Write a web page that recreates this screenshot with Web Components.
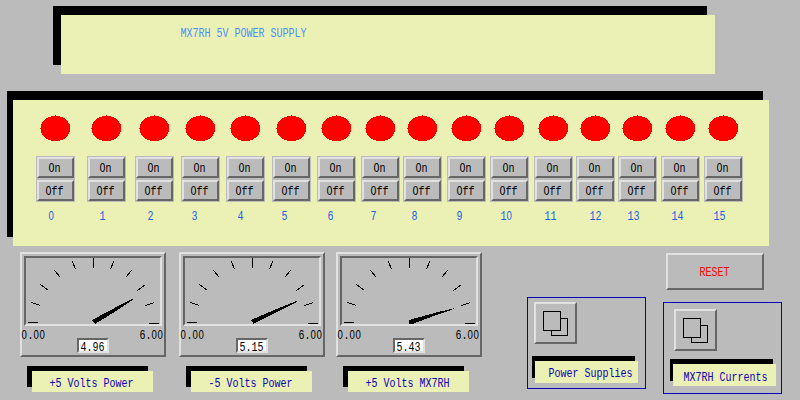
<!DOCTYPE html>
<html lang="en">
<head>
<meta charset="utf-8">
<title>MX7RH 5V Power Supply</title>
<style>
  html, body { margin: 0; width: 800px; height: 400px; overflow: hidden; background: #bbb; }
</style>
</head>
<body>
<supply-console></supply-console>
<script>
const define = (name, css, html) => {
  const tpl = document.createElement('template');
  customElements.define(name, class extends HTMLElement {
    connectedCallback() {
      if (this.shadowRoot) return;
      tpl.innerHTML = `<style>:host{display:block;box-sizing:border-box}*{box-sizing:border-box}${css}</style>` +
        (typeof html === 'function' ? html(this) : html);
      const content = tpl.content.cloneNode(true);
      this.attachShadow({ mode: 'open' }).append(content);
    }
  });
};

/* Tall, narrow terminal lettering: 6px cells, baseline 10px below the top. Zeros are drawn plain. */
define('term-text', `
  :host { height: 13px; width: max-content; white-space: pre; }
  div { font: 10px/13px "Liberation Mono", monospace; transform-origin: 0 9px; transform: translate(.4px, 1px) scaleY(1.37); }
  i { font: 9.6px/1 "Liberation Sans", sans-serif; line-height: 0; letter-spacing: .66px; }
`, el => `<div>${el.getAttribute('value').replace(/0/g, '<i>0</i>')}</div>`);

/* Cream plate with a hard black shadow up and to the left. */
define('shadow-plate', `
  :host { background: #ebf0b5; box-shadow: calc(-1 * var(--dx)) calc(-1 * var(--dy)) 0 #000; }
`, '<slot></slot>');

define('bevel-box', `
  :host { border: 2px solid; border-color: #e1e1e1 #666 #666 #e1e1e1; background: #bbb; }
  :host([sunken]) { border-color: #666 #e1e1e1 #e1e1e1 #666; }
`, '<slot></slot>');

define('status-lamp', `
  :host { width: 30px; height: 26px; }
  svg { display: block; }
`, `<svg width="30" height="26" shape-rendering="crispEdges" fill="red">
  <ellipse cx="15.5" cy="13.5" rx="14.8" ry="12.7"/><path d="M15 0h1v2h-1zM0 13h2v1H0z"/></svg>`);

define('power-channel', `
  :host { width: 39px; padding-top: 15px; flex: none; }
  status-lamp { margin-left: 4px; }
  .pair { margin-top: 15px; height: 46px; padding: 1px; background: #bbb; display: flex; flex-direction: column; gap: 2px; }
  bevel-box { width: 37px; height: 21px; }
  .on { padding: 3px 0 0 9px; }
  .off { padding: 3px 0 0 6px; }
  .num { margin-top: 8px; color: #2160e6; }
`, el => `<status-lamp></status-lamp>
  <div class="pair">
    <bevel-box class="on"><term-text value="On"></term-text></bevel-box>
    <bevel-box class="off"><term-text value="Off"></term-text></bevel-box>
  </div>
  <term-text class="num" style="margin-left:${el.getAttribute('inset')}px" value="${el.getAttribute('number')}"></term-text>`);

define('volt-meter', `
  :host { width: 146px; flex: none; }
  .case { height: 105px; padding: 2px; }
  .dial { width: 138px; height: 70px; }
  svg { display: block; }
  .foot { display: grid; grid-template-columns: 56px 32px 1fr; height: 28px; margin-left: -3px; }
  .low { margin-top: 3px; }
  .value { width: 32px; height: 15px; margin-top: 12px; background: #fff; padding: 1px 0 0 1px; }
  .high { margin: 3px 0 0 30px; }
  shadow-plate { --dx: 5px; --dy: 5px; width: 121px; height: 21px; margin: 14px 0 0 12px; padding: 6px 0 0 17px; color: #0900b8; }
`, el => `<bevel-box class="case">
    <bevel-box class="dial" sunken>
      <svg width="134" height="66" viewBox="6 6 134 66" shape-rendering="crispEdges" stroke="#000" fill="none">
        <path d="M8 70.5h10M129 71.5h10M73.5 6v10M11.5 50.5l9 3M20.5 32.5l8 6M34.5 18.5l6 7M52.5 9.5l3 8M93.5 9.5l-3 8M111.5 18.5l-6 7M125.5 32.5l-8 6M134.5 50.5l-9 3"/>
        <path stroke="none" fill="#000" d="${el.getAttribute('needle')}"/>
      </svg>
    </bevel-box>
    <div class="foot">
      <term-text class="low" value="0.00"></term-text>
      <bevel-box class="value" sunken><term-text value="${el.getAttribute('value')}"></term-text></bevel-box>
      <term-text class="high" value="6.00"></term-text>
    </div>
  </bevel-box>
  <shadow-plate><term-text value="${el.getAttribute('caption')}"></term-text></shadow-plate>`);

define('screen-link', `
  :host { width: 119px; height: 92px; border: 1px solid #0900b8; flex: none; color: #0900b8; }
  bevel-box { width: 43px; height: 42px; margin: var(--button); }
  svg { display: block; }
  shadow-plate { --dx: 3px; --dy: 5px; width: 103px; height: 22px; margin: var(--plate); padding: var(--text); }
`, el => `<bevel-box><svg width="39" height="38" viewBox="2 2 39 38" shape-rendering="crispEdges" stroke="#000" fill="#bbb">
    <rect x="17.5" y="16.5" width="16" height="17"/><rect x="9.5" y="9.5" width="17" height="19"/></svg></bevel-box>
  <shadow-plate><term-text value="${el.getAttribute('caption')}"></term-text></shadow-plate>`);

const lefts = [36, 87, 135, 181, 226, 272, 317, 361, 403, 447, 490, 534, 576, 618, 661, 704];
const labels = [48, 99, 147, 191, 237, 281, 327, 370, 411, 456, 500, 544, 589, 627, 671, 713];
const channels = lefts.map((x, i) =>
  `<power-channel number="${i}" inset="${labels[i] - x}" style="margin-left:${i ? x - lefts[i - 1] - 39 : 23}px"></power-channel>`).join('');

define('supply-console', `
  :host { width: 800px; height: 400px; display: flex; flex-direction: column; background: #bbb; color: #000; }
  .title { --dx: 8px; --dy: 9px; width: 654px; height: 59px; margin: 15px 0 0 61px; padding: 12px 0 0 119px; color: #4a90ff; flex: none; }
  .bank { --dx: 6px; --dy: 9px; width: 756px; height: 146px; margin: 26px 0 0 13px; display: flex; flex: none; }
  .lower { display: flex; align-items: flex-start; margin-top: 6px; }
  .m1 { margin-left: 20px; } .m2 { margin-left: 13px; } .m3 { margin-left: 11px; }
  .supplies { margin: 45px 0 0 45px; --button: 4px 0 0 6px; --plate: 17px 0 0 7px; --text: 6px 0 0 13px; }
  .side { margin-left: 17px; }
  .reset { width: 98px; height: 37px; margin: 1px 0 0 3px; padding: 11px 0 0 31px; color: #f00; }
  .currents { margin-top: 12px; --button: 6px 0 0 10px; --plate: 13px 0 0 9px; --text: 7px 0 0 10px; }
`, `<shadow-plate class="title"><term-text value="MX7RH 5V POWER SUPPLY"></term-text></shadow-plate>
  <shadow-plate class="bank">${channels}</shadow-plate>
  <div class="lower">
    <volt-meter class="m1" value="4.96" caption="+5 Volts Power" needle="M72 68L75 72L98 57.8L113.5 47.5L112.5 46.7L97 54.7Z"></volt-meter>
    <volt-meter class="m2" value="5.15" caption="-5 Volts Power" needle="M72 68L74.5 72L101 58.6L118.5 49.5L118 48.8L100 56Z"></volt-meter>
    <volt-meter class="m3" value="5.43" caption="+5 Volts MX7RH" needle="M73 68V72H76.5L101 62.8L118.5 56.8L118 56.2L100 60.6Z"></volt-meter>
    <screen-link class="supplies" caption="Power Supplies"></screen-link>
    <div class="side">
      <bevel-box class="reset"><term-text value="RESET"></term-text></bevel-box>
      <screen-link class="currents" caption="MX7RH Currents"></screen-link>
    </div>
  </div>`);
</script>
</body>
</html>
